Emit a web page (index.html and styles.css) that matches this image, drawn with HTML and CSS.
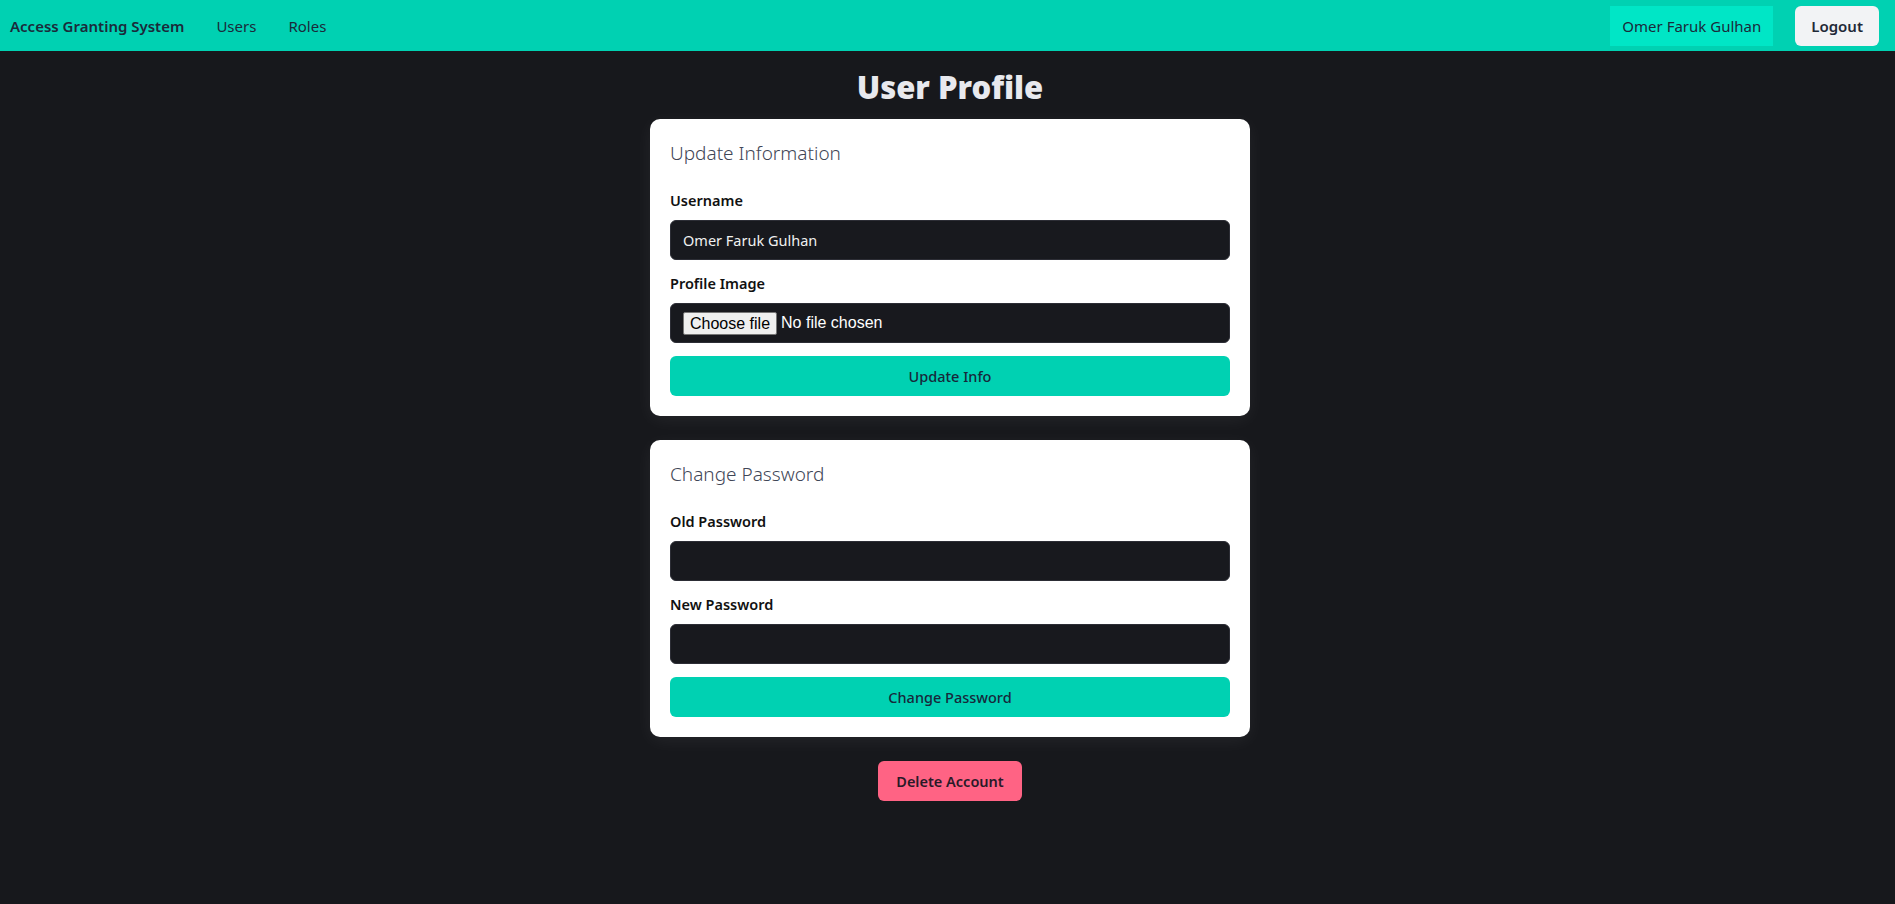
FILE: index.html
```
<!DOCTYPE html>
<html lang="en">
<head>
<meta charset="utf-8">
<title>User Profile</title>
<link rel="stylesheet" href="styles.css">
</head>
<body>
<nav class="navbar">
  <div class="nav-left">
    <a class="brand" href="#">Access Granting System</a>
    <a class="nav-link" href="#">Users</a>
    <a class="nav-link" href="#">Roles</a>
  </div>
  <div class="nav-right">
    <span class="nav-user">Omer Faruk Gulhan</span>
    <button class="btn-logout" type="button">Logout</button>
  </div>
</nav>
<main class="page">
  <h1 class="title">User Profile</h1>
  <section class="card">
    <h2 class="card-title">Update Information</h2>
    <div class="field">
      <label class="label">Username</label>
      <input class="input" type="text" value="Omer Faruk Gulhan">
    </div>
    <div class="field">
      <label class="label">Profile Image</label>
      <label class="input file-wrap">
        <span class="file-btn">Choose file</span>
        <span class="file-name">No file chosen</span>
        <input class="file" type="file">
      </label>
    </div>
    <button class="btn-primary" type="button">Update Info</button>
  </section>
  <section class="card">
    <h2 class="card-title">Change Password</h2>
    <div class="field">
      <label class="label">Old Password</label>
      <input class="input" type="password">
    </div>
    <div class="field">
      <label class="label">New Password</label>
      <input class="input" type="password">
    </div>
    <button class="btn-primary" type="button">Change Password</button>
  </section>
  <button class="btn-danger" type="button">Delete Account</button>
</main>
</body>
</html>
```
FILE: styles.css
```
* { box-sizing: border-box; }
html, body { margin: 0; padding: 0; }
body {
  background: #17181c;
  font-family: "Noto Sans", "Open Sans", sans-serif;
  font-size: 15px;
  color: #111;
  height: 904px;
  overflow: hidden;
}
.navbar {
  height: 51px;
  background: #00d1b2;
  display: flex;
  align-items: center;
  justify-content: space-between;
  padding: 0 16px 0 10px;
}
.nav-left { display: flex; align-items: center; }
.brand {
  color: #1b2a3a;
  font-weight: 600;
  font-size: 15px;
  text-decoration: none;
  margin-right: 32px;
}
.nav-link {
  color: #1b2a3a;
  text-decoration: none;
  font-size: 15px;
  margin-right: 32px;
}
.nav-right { display: flex; align-items: center; gap: 22px; }
.nav-user {
  background: #00e6c6;
  color: #1b2a3a;
  height: 40px;
  display: flex;
  align-items: center;
  padding: 0 12px;
  font-size: 15px;
}
.btn-logout {
  background: #f2f3f5;
  color: #1f2937;
  border: 0;
  border-radius: 6px;
  height: 40px;
  padding: 0 16px;
  font-family: inherit;
  font-size: 15px;
  font-weight: 600;
}
.page {
  display: flex;
  flex-direction: column;
  align-items: center;
  padding: 18px 0 0 5px;
}
.title {
  margin: 0 0 14px;
  font-size: 31px;
  line-height: 36px;
  font-weight: 900;
  color: #e8e9ee;
}
.card {
  width: 600px;
  background: #fff;
  border-radius: 10px;
  padding: 20px 20px 20px;
  margin-bottom: 24px;
  box-shadow: 0 4px 18px rgba(255, 255, 255, 0.06);
}
.card-title {
  margin: 0 0 23px;
  font-size: 19px;
  line-height: 28px;
  font-weight: 300;
  color: #3f4656;
}
.field { display: flex; flex-direction: column; margin-bottom: 13px; }
.label {
  font-size: 14.5px;
  line-height: 20px;
  font-weight: 600;
  color: #111;
  margin-bottom: 10px;
}
.input {
  height: 40px;
  background: #18191e;
  border: 1px solid #2c2d35;
  border-radius: 6px;
  padding: 0 12px;
  color: #f0f0f0;
  font-family: inherit;
  font-size: 14.5px;
  outline: none;
}
.file-wrap {
  display: flex;
  align-items: center;
  font-family: "Liberation Sans", Arial, sans-serif;
  font-size: 16px;
  color: #fff;
}
.file-btn {
  background: #efefef;
  color: #000;
  border: 1px solid #767676;
  border-radius: 2px;
  padding: 1px 6px;
  margin-right: 4px;
  line-height: 19px;
}
.file { display: none; }
.btn-primary {
  display: block;
  width: 100%;
  height: 40px;
  background: #00d1b2;
  color: #17283a;
  border: 0;
  border-radius: 6px;
  font-family: inherit;
  font-size: 14.5px;
  font-weight: 500;
}
.btn-danger {
  height: 40px;
  padding: 0 18px;
  background: #ff6384;
  color: #2a1a28;
  border: 0;
  border-radius: 6px;
  font-family: inherit;
  font-size: 14.5px;
  font-weight: 600;
}
```
